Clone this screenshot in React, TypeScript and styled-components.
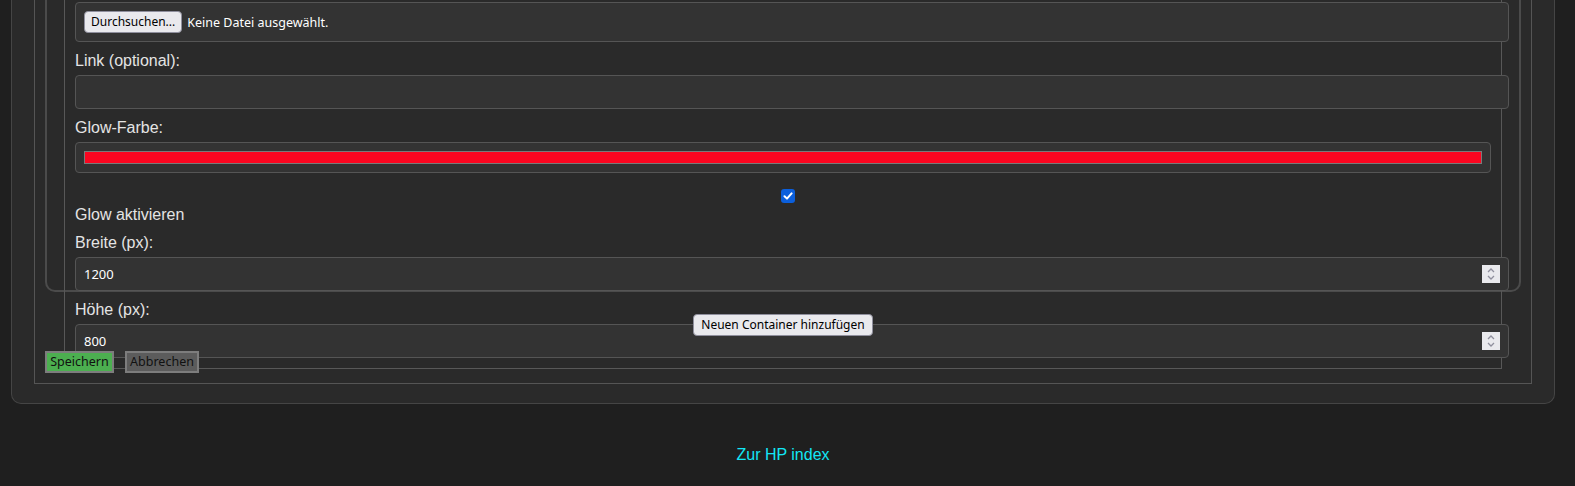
import styled, { createGlobalStyle } from "styled-components";

const GlobalStyle = createGlobalStyle`
  html, body {
    margin: 0;
    padding: 0;
    background: #1f1f1f;
  }

  body {
    font-family: "Liberation Sans", Arial, sans-serif;
    color: #e2e2e2;
  }
`;

const Page = styled.div`
  padding: 0 20px 0 11px;
`;

const Card = styled.div`
  background: #2a2a2a;
  border: 1px solid #454545;
  border-top: none;
  border-radius: 0 0 10px 10px;
  padding: 0 22px 19px;
`;

const FormFrame = styled.div`
  border: 1px solid #555555;
  border-top: none;
  padding: 0 10px 10px;
`;

const ContainerPanel = styled.div`
  box-sizing: border-box;
  height: 292px;
  border: 2px solid #4b4b4b;
  border-top: none;
  border-radius: 0 0 10px 10px;
  padding: 0 17px;
`;

const ContainerBody = styled.div`
  border: 1px solid #585858;
  border-top: none;
  padding: 2px 10px 0;
`;

const FileBox = styled.div`
  display: flex;
  align-items: center;
  gap: 5px;
  height: 22px;
  padding: 8px;
  border: 1px solid #555555;
  border-radius: 4px;
  background: #333333;
  margin-bottom: 10px;
  width: 100%;
  box-sizing: content-box;
`;

const SystemButton = styled.button`
  box-sizing: border-box;
  height: 22px;
  padding: 0 6px;
  border: 1px solid #8f8f9d;
  border-radius: 4px;
  background: #e9e9ed;
  color: #000;
  font-family: "Noto Sans", "DejaVu Sans", sans-serif;
  font-size: 12px;
  line-height: 20px;
  white-space: nowrap;
  cursor: pointer;
`;

const FileName = styled.span`
  font-family: "Noto Sans", "DejaVu Sans", sans-serif;
  font-size: 12.5px;
  color: #ffffff;
`;

const Label = styled.label<{ $gap?: number }>`
  display: block;
  font-size: 16px;
  line-height: 18px;
  margin-bottom: ${(p) => (p.$gap ?? 5)}px;
  color: #e4e4e4;
`;

const TextInput = styled.input`
  display: block;
  box-sizing: content-box;
  width: 100%;
  height: 16px;
  padding: 8px;
  margin: 0 0 10px;
  border: 1px solid #555555;
  border-radius: 4px;
  background: #333333;
  color: #ffffff;
  font-family: "Noto Sans", "DejaVu Sans", sans-serif;
  font-size: 12.5px;
  outline: none;
`;

const ColorBox = styled.div`
  box-sizing: border-box;
  width: 100%;
  height: 31px;
  padding: 8px;
  border: 1px solid #555555;
  border-radius: 4px;
  background: #333333;
  margin-bottom: 16px;
`;

const Swatch = styled.div<{ $color: string }>`
  box-sizing: border-box;
  height: 13px;
  border: 1px solid #7a7a7a;
  background: ${(p) => p.$color};
`;

const CheckRow = styled.div`
  display: flex;
  justify-content: center;
  padding-left: 9px;
  margin-bottom: 3px;
`;

const CheckBox = styled.span`
  display: flex;
  align-items: center;
  justify-content: center;
  width: 14px;
  height: 14px;
  border-radius: 3px;
  background: #0b5fdc;
`;

const NumberField = styled.div`
  display: flex;
  align-items: center;
  box-sizing: content-box;
  width: 100%;
  height: 16px;
  padding: 8px;
  margin-bottom: 10px;
  border: 1px solid #555555;
  border-radius: 4px;
  background: #333333;
`;

const NumberValue = styled.input`
  flex: 1;
  min-width: 0;
  padding: 0;
  border: none;
  background: transparent;
  color: #ffffff;
  font-family: "Noto Sans", "DejaVu Sans", sans-serif;
  font-size: 13px;
  outline: none;
`;

const Spinner = styled.span`
  display: flex;
  align-items: center;
  justify-content: center;
  width: 18px;
  height: 18px;
  margin: -1px 0;
  background: #e9e9ed;
`;

const AddRow = styled.div`
  text-align: center;
  margin-top: 22px;
  height: 22px;
`;

const AddButton = styled(SystemButton)`
  width: 180px;
`;

const ActionRow = styled.div`
  display: flex;
  gap: 11px;
  margin-top: 15px;
`;

const ActionButton = styled.button<{ $bg: string; $w: number }>`
  box-sizing: border-box;
  width: ${(p) => p.$w}px;
  height: 22px;
  padding: 0;
  border: 2px solid #7d7d7d;
  background: ${(p) => p.$bg};
  color: #111;
  font-family: "Noto Sans", "DejaVu Sans", sans-serif;
  font-size: 12.5px;
  line-height: 18px;
  white-space: nowrap;
  cursor: pointer;
`;

const BackLink = styled.a`
  display: block;
  margin-top: 42px;
  text-align: center;
  font-size: 16px;
  line-height: 18px;
  color: #12e6f5;
  text-decoration: none;
`;

const SpinIcon = () => (
  <svg width="10" height="14" viewBox="0 0 10 14">
    <polyline points="2,5 5,2 8,5" fill="none" stroke="#8f8f9d" strokeWidth="1.3" />
    <polyline points="2,9 5,12 8,9" fill="none" stroke="#8f8f9d" strokeWidth="1.3" />
  </svg>
);

const NumberInput = ({ value }: { value: string }) => (
  <NumberField>
    <NumberValue type="text" defaultValue={value} />
    <Spinner>
      <SpinIcon />
    </Spinner>
  </NumberField>
);

export default function App() {
  return (
    <>
      <GlobalStyle />
      <Page>
        <Card>
          <FormFrame>
            <ContainerPanel>
              <ContainerBody>
                <FileBox>
                  <SystemButton type="button">Durchsuchen...</SystemButton>
                  <FileName>Keine Datei ausgewählt.</FileName>
                </FileBox>

                <Label>Link (optional):</Label>
                <TextInput type="text" />

                <Label>Glow-Farbe:</Label>
                <ColorBox>
                  <Swatch $color="#fb0620" />
                </ColorBox>

                <CheckRow>
                  <CheckBox>
                    <svg width="10" height="10" viewBox="0 0 10 10">
                      <polyline
                        points="1.5,5.2 4,7.6 8.6,2.4"
                        fill="none"
                        stroke="#ffffff"
                        strokeWidth="2"
                        strokeLinecap="round"
                        strokeLinejoin="round"
                      />
                    </svg>
                  </CheckBox>
                </CheckRow>
                <Label $gap={10}>Glow aktivieren</Label>

                <Label>Breite (px):</Label>
                <NumberInput value="1200" />

                <Label>Höhe (px):</Label>
                <NumberInput value="800" />
              </ContainerBody>
            </ContainerPanel>

            <AddRow>
              <AddButton type="button">Neuen Container hinzufügen</AddButton>
            </AddRow>

            <ActionRow>
              <ActionButton type="button" $bg="#4caf50" $w={69}>
                Speichern
              </ActionButton>
              <ActionButton type="button" $bg="#5c5c5c" $w={74}>
                Abbrechen
              </ActionButton>
            </ActionRow>
          </FormFrame>
        </Card>
        <BackLink href="#">Zur HP index</BackLink>
      </Page>
    </>
  );
}
